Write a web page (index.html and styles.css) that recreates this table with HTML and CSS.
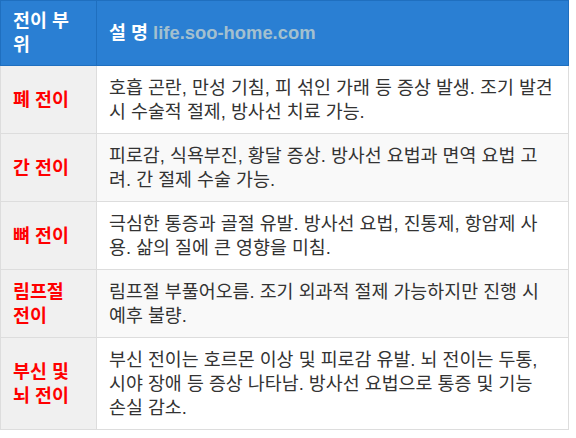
FILE: index.html
```html
<!DOCTYPE html>
<html lang="ko">
<head>
<meta charset="utf-8">
<link rel="stylesheet" href="styles.css">
</head>
<body>
<table class="meta-table">
  <thead>
    <tr>
      <th class="col-site">전이 부위</th>
      <th class="col-desc">설 명 <span class="watermark">life.soo-home.com</span></th>
    </tr>
  </thead>
  <tbody>
    <tr>
      <td class="site">폐 전이</td>
      <td class="desc">호흡 곤란, 만성 기침, 피 섞인 가래 등 증상 발생. 조기 발견시 수술적 절제, 방사선 치료 가능.</td>
    </tr>
    <tr class="alt">
      <td class="site">간 전이</td>
      <td class="desc">피로감, 식욕부진, 황달 증상. 방사선 요법과 면역 요법 고려. 간 절제 수술 가능.</td>
    </tr>
    <tr>
      <td class="site">뼈 전이</td>
      <td class="desc">극심한 통증과 골절 유발. 방사선 요법, 진통제, 항암제 사용. 삶의 질에 큰 영향을 미침.</td>
    </tr>
    <tr class="alt">
      <td class="site">림프절 전이</td>
      <td class="desc">림프절 부풀어오름. 조기 외과적 절제 가능하지만 진행 시 예후 불량.</td>
    </tr>
    <tr>
      <td class="site">부신 및 뇌 전이</td>
      <td class="desc keep-words">부신 전이는 호르몬 이상 및 피로감 유발. 뇌 전이는 두통, 시야 장애 등 증상 나타남. 방사선 요법으로 통증 및 기능 손실 감소.</td>
    </tr>
  </tbody>
</table>
</body>
</html>
```

FILE: styles.css
```css
html, body {
  margin: 0;
  padding: 0;
  background: #ffffff;
}

body {
  font-family: "Liberation Sans", Arial, "Noto Sans CJK KR", sans-serif;
  font-size: 18.4px;
  color: #333333;
}

.meta-table {
  width: 569px;
  border-collapse: collapse;
  table-layout: fixed;
}

.meta-table th {
  background: #2a7fd3;
  color: #ffffff;
  font-weight: bold;
  text-align: left;
  line-height: 24px;
  padding: 8px 12px;
  border: 1px solid #1f6fbf;
}

.col-site {
  width: 71px;
}

.watermark {
  color: #a3c0cf;
}

.meta-table td {
  line-height: 24px;
  padding: 10px 12px 9px;
  border: 1px solid #dddddd;
  vertical-align: middle;
}

.site {
  background: #f0f0f0;
  color: #ff0000;
  font-weight: bold;
}

.desc {
  background: #ffffff;
}

.keep-words {
  word-break: keep-all;
}

.alt .desc {
  background: #f9f9f9;
}
```
